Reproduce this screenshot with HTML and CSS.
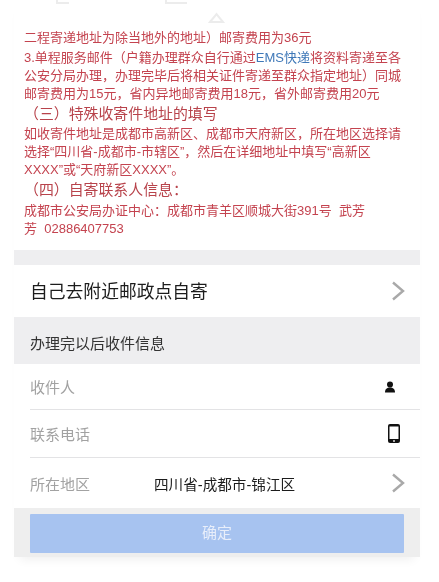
FILE: index.html
```html
<!DOCTYPE html>
<html lang="zh">
<head>
<meta charset="utf-8">
<title>办理完以后收件信息</title>
<link rel="stylesheet" href="styles.css">
</head>
<body>
<svg class="marks" width="439" height="30" viewBox="0 0 439 30" aria-hidden="true">
  <path d="M57 0v3h12M166 0v3h21M210 22l6.500-8 6.500 8z" fill="none" stroke="#ececec" stroke-width="2"/>
</svg>
<main class="sheet">
  <section class="notice">
    <p class="line">二程寄递地址为除当地外的地址）邮寄费用为36元</p>
    <p class="line">3.单程服务邮件（户籍办理群众自行通过<span class="link">EMS快递</span>将资料寄递至各</p>
    <p class="line">公安分局办理，办理完毕后将相关证件寄递至群众指定地址）同城</p>
    <p class="line">邮寄费用为15元，省内异地邮寄费用18元，省外邮寄费用20元</p>
    <h2 class="heading">（三）特殊收寄件地址的填写</h2>
    <p class="line">如收寄件地址是成都市高新区、成都市天府新区，所在地区选择请</p>
    <p class="line">选择“四川省-成都市-市辖区”，然后在详细地址中填写“高新区</p>
    <p class="line">XXXX”或“天府新区XXXX”。</p>
    <h2 class="heading heading-contact">（四）自寄联系人信息：</h2>
    <p class="line">成都市公安局办证中心：成都市青羊区顺城大街391号&nbsp;&nbsp;武芳</p>
    <p class="line">芳&nbsp;&nbsp;02886407753</p>
  </section>
  <div class="gap-small"></div>
  <div class="self-row">
    <span class="self-text">自己去附近邮政点自寄</span>
    <svg class="chevron" width="14" height="20" viewBox="0 0 14 20"><path d="M2 1.500l10 8.500-10 8.500" fill="none" stroke="#a9a9a9" stroke-width="2.400"/></svg>
  </div>
  <div class="section-title">办理完以后收件信息</div>
  <div class="field field-first">
    <span class="label">收件人</span>
    <svg class="icon-person" width="12" height="12" viewBox="0 0 12 12"><circle cx="6" cy="3.400" r="3" fill="#111"/><path d="M1 11.500c0-3.600 2-5 5-5s5 1.400 5 5z" fill="#111"/></svg>
  </div>
  <div class="field field-phone">
    <span class="label">联系电话</span>
    <svg class="icon-phone" width="12" height="19" viewBox="0 0 12 19"><rect width="12" height="19" rx="2" fill="#111"/><rect x="1.500" y="2.500" width="9" height="12.500" fill="#fff"/><circle cx="6" cy="17" r="1" fill="#ddd"/></svg>
  </div>
  <div class="field field-area">
    <span class="label">所在地区</span>
    <span class="value">四川省-成都市-锦江区</span>
    <svg class="chevron" width="14" height="20" viewBox="0 0 14 20"><path d="M2 1.500l10 8.500-10 8.500" fill="none" stroke="#a9a9a9" stroke-width="2.400"/></svg>
  </div>
  <div class="actions">
    <button class="confirm" type="button">确定</button>
  </div>
</main>
</body>
</html>
```
FILE: styles.css
```css
* { box-sizing: border-box; }
html, body { margin: 0; padding: 0; }
body {
  width: 439px;
  height: 582px;
  overflow: hidden;
  background: #fff;
  position: relative;
  font-family: "Liberation Sans", "Noto Sans CJK SC", sans-serif;
}
.marks { position: absolute; top: 0; left: 0; }
.sheet {
  width: 406px;
  margin-left: 14px;
  padding-top: 29px;
  box-shadow: 0 8px 10px -6px rgba(0,0,0,.07);
  filter: blur(.3px);
}
.notice { padding: 0 0 0 10px; height: 221px; }
.line {
  margin: 0;
  height: 18px;
  line-height: 18px;
  font-size: 13px;
  color: #c4434f;
  white-space: nowrap;
}
.line:first-child { margin-bottom: 2px; }
.link { color: #3f78b8; }
.heading {
  margin: 0;
  height: 22px;
  line-height: 22px;
  font-size: 14.900px;
  font-weight: 400;
  color: #b8434b;
  white-space: nowrap;
}
.heading-contact { height: 23px; line-height: 23px; }
.gap-small { height: 15px; background: #eeeef0; }
.self-row {
  height: 52px;
  padding: 0 15px 0 16px;
  display: flex;
  align-items: center;
  justify-content: space-between;
  font-size: 17.800px;
  color: #1c1c1c;
  background: #fff;
}
.self-text { padding-bottom: 2px; }
.section-title {
  height: 47px;
  padding: 3px 0 0 16px;
  display: flex;
  align-items: center;
  font-size: 15px;
  color: #333;
  background: #eeeef0;
}
.field {
  display: flex;
  align-items: center;
  margin-left: 16px;
  padding-right: 15px;
  background: #fff;
}
.field-first { height: 46px; border-bottom: 1px solid #e3e3e5; justify-content: space-between; padding-right: 24px; }
.field-phone { height: 48px; border-bottom: 1px solid #e3e3e5; justify-content: space-between; padding-right: 20px; }
.field-area { height: 50px; justify-content: space-between; }
.label { font-size: 15px; color: #a2a2a2; }
.value { font-size: 14.600px; color: #1c1c1c; margin-right: auto; padding-left: 64px; }
.actions {
  height: 49px;
  padding: 6px 16px 4px;
  background: #eeeeee;
}
.confirm {
  display: block;
  width: 100%;
  height: 39px;
  border: 0;
  border-radius: 1px;
  padding: 0 0 4px;
  background: #a7c3f0;
  color: #e8eefa;
  font-family: inherit;
  font-size: 15px;
}
```
